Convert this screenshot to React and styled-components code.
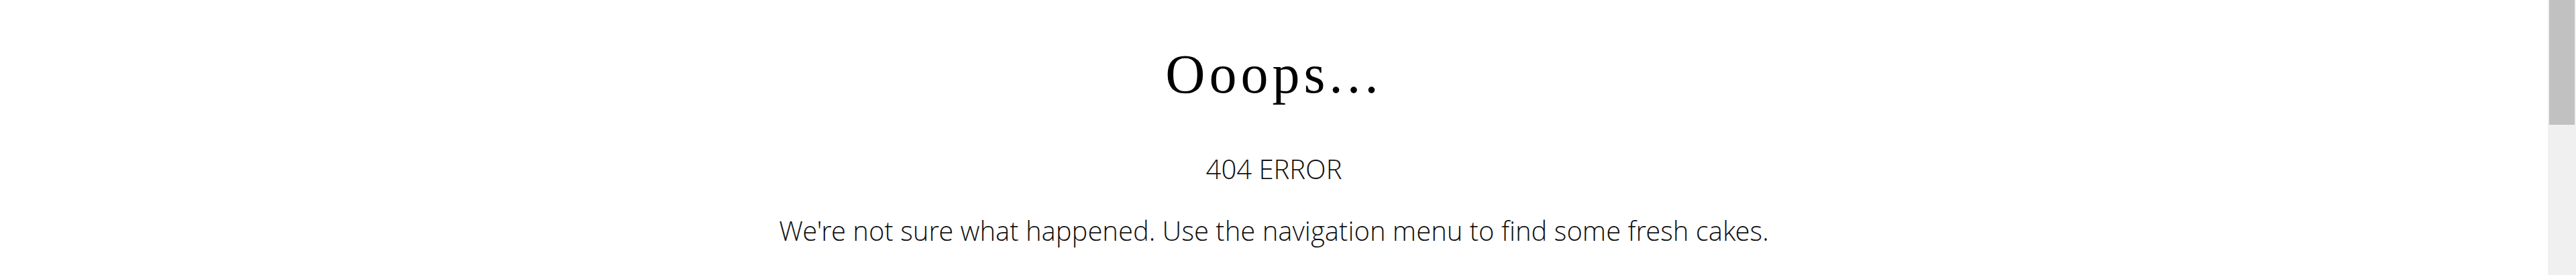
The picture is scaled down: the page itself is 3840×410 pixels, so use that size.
import styled, { createGlobalStyle } from "styled-components";

const GlobalStyle = createGlobalStyle`
	html, body {
		margin: 0;
		padding: 0;
		background: #ffffff;
		overflow: hidden;
	}
`;

const Window = styled.div`
	display: flex;
	height: 410px;
`;

const Page = styled.main`
	flex: 1;
	display: flex;
	flex-direction: column;
	align-items: center;
	padding-top: 70px;
	box-sizing: border-box;
	font-family: "Open Sans Light", "Open Sans", "Liberation Sans", sans-serif;
	color: #111;
`;

const Title = styled.h1`
	margin: 0;
	font-family: "Liberation Serif", "DejaVu Serif", serif;
	font-weight: 400;
	font-size: 82px;
	line-height: 1;
	letter-spacing: 6px;
	color: #000;
`;

const Text = styled.p`
	margin: ${props => props.gap || 0}px 0 0;
	font-weight: 300;
	font-size: 40px;
	line-height: 1;
`;

const ScrollTrack = styled.div`
	width: 42px;
	padding: 0 2px;
	box-sizing: border-box;
	background: #f0f0f0;
`;

const ScrollThumb = styled.div`
	height: 186px;
	background: #c1c1c1;
`;

const NotFound = () => {
	return (
		<Page>
			<Title>Ooops...</Title>
			<Text gap={80}>404 ERROR</Text>
			<Text gap={52}>
				We're not sure what happened. Use the navigation menu to find some fresh cakes.
			</Text>
		</Page>
	);
};

export default function App() {
	return (
		<>
			<GlobalStyle />
			<Window>
				<NotFound />
				<ScrollTrack>
					<ScrollThumb />
				</ScrollTrack>
			</Window>
		</>
	);
}
